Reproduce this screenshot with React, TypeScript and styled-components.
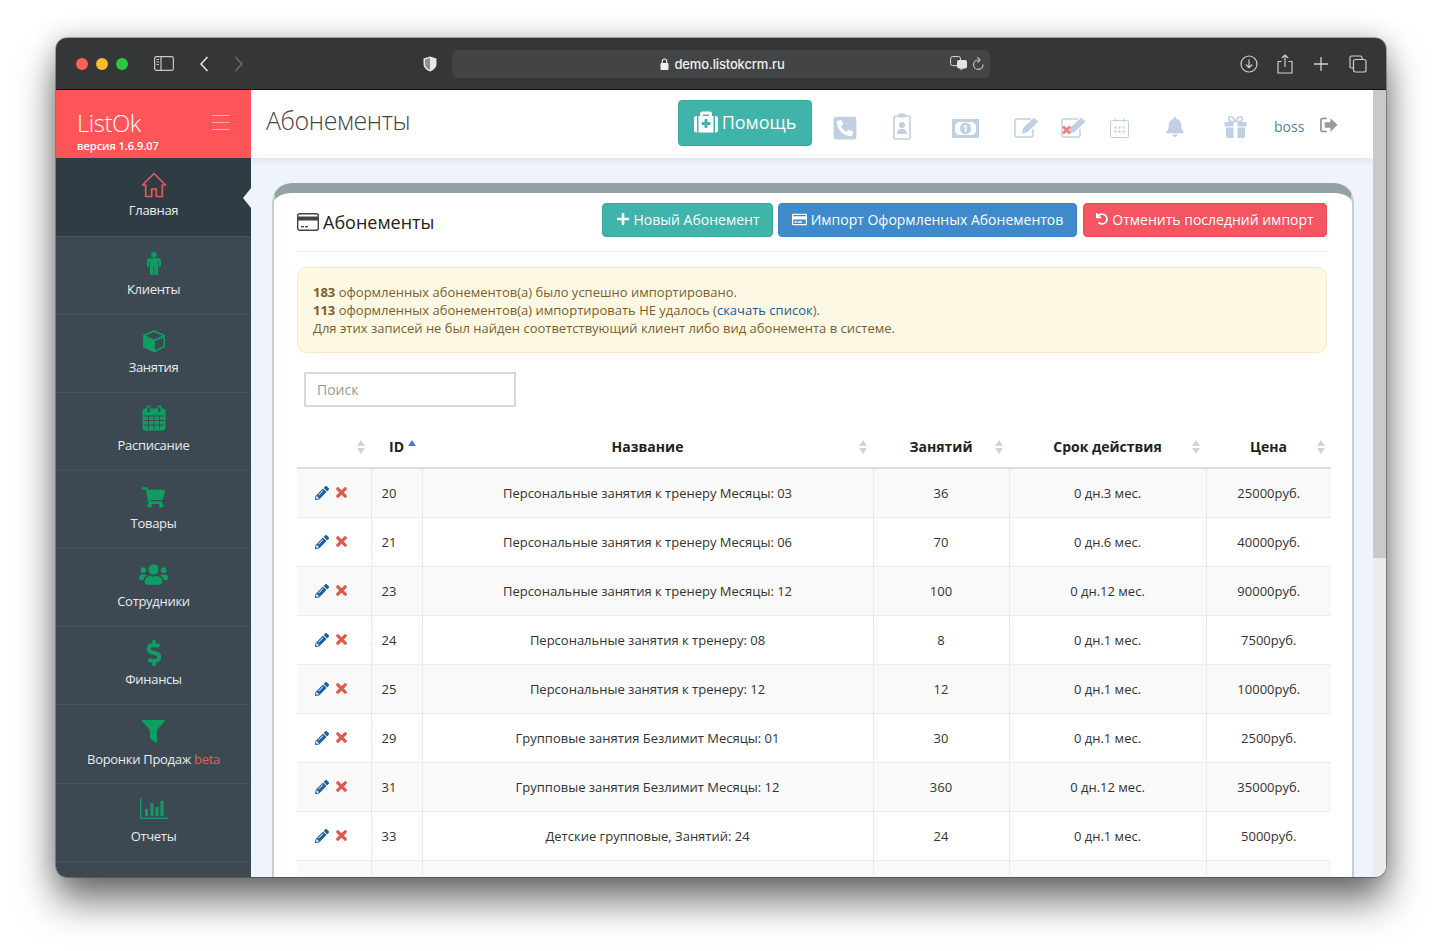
import React from "react";
import styled, { createGlobalStyle } from "styled-components";
import { FaMedkit, FaPlus, FaRegCreditCard, FaUndo, FaPencilAlt, FaShoppingCart, FaUsers, FaDollarSign, FaPhoneSquareAlt, FaBell } from "react-icons/fa";

const Global = createGlobalStyle`
  html, body { margin: 0; padding: 0; background: #fff; }
  * { box-sizing: border-box; }
  body { font-family: "Open Sans", "Liberation Sans", sans-serif; }
`;
const Page = styled.div`
  width: 1441px; height: 951px; padding: 38px 55px 74px 56px; background: #fff; overflow: hidden;
`;
const Win = styled.div`
  width: 1330px; height: 839px; border-radius: 11px; overflow: hidden; display: flex; flex-direction: column;
  background: #eff3fb;
  box-shadow: 0 0 0 .5px rgba(0,0,0,.55), 0 24px 38px rgba(0,0,0,.55), 0 0 26px rgba(0,0,0,.2);
`;
const TitleBar = styled.div`
  height: 52px; flex: none; background: #353638; display: flex; align-items: center; border-bottom: 1px solid #111;
  color: #d4d4d4; padding-left: 20px;
`;
const Light = styled.span<{ $c: string; $mr: number }>`
  width: 12px; height: 12px; border-radius: 50%; background: ${p => p.$c}; margin-right: ${p => p.$mr}px; flex: none;
`;
const ChromeIcon = styled.svg<{ $ml: number }>`
  margin-left: ${p => p.$ml}px; flex: none; display: block;
`;
const UrlBar = styled.div`
  width: 538px; height: 28px; margin-left: 15px; border-radius: 6px; background: #434446; flex: none;
  display: flex; align-items: center; position: relative; justify-content: center; color: #f0f0f0;
  font: 500 13px/26px Inter, "Open Sans", sans-serif; letter-spacing: -.15px;
  gap: 5px; padding: 1px 0 0 3px;
`;
const UrlTools = styled.div`
  position: absolute; right: 5px; top: 5px; display: flex; align-items: center; gap: 4px; height: 18px;
`;
const Body = styled.div`
  flex: 1; min-height: 0; display: flex;
`;
const Sidebar = styled.div`
  width: 195px; flex: none; background: #3c4852; display: flex; flex-direction: column; position: relative;
`;
const Brand = styled.div`
  height: 68px; flex: none; background: #ff5558; color: #fff; padding: 17px 20px 0 21px; position: relative;
`;
const BrandName = styled.div`
  font-size: 24px; font-weight: 300; line-height: 32px; letter-spacing: -.5px;
`;
const BrandVersion = styled.div`
  font-size: 11px; font-weight: 600; line-height: 11px; margin-top: 1px; letter-spacing: -.05px;
`;
const Burger = styled.div`
  position: absolute; right: 21px; top: 25px; width: 18px; height: 15px;
  border-top: 1px solid #ffaaab; border-bottom: 1px solid #ffaaab;
  &::after { content: ""; display: block; height: 1px; background: #ffaaab; margin-top: 6px; }
`;
const NavItem = styled.div<{ $active?: boolean; $h?: number; $pt?: number }>`
  height: ${p => p.$h || 78}px; flex: none; display: flex; flex-direction: column; align-items: center; position: relative;
  background: ${p => (p.$active ? "#303c44" : "#3c4852")};
  border-bottom: 1px solid #465159; padding-top: ${p => p.$pt ?? 12}px; color: #e9ecee; font-size: 13px; line-height: 18px;
  white-space: nowrap; letter-spacing: -.3px;
`;
const NavIcon = styled.div<{ $gap?: number }>`
  height: 28px; display: flex; align-items: center; justify-content: center; color: #0d9e63; margin-bottom: ${p => p.$gap ?? 3}px;
`;
const Notch = styled.span`
  position: absolute; right: 0; top: 30px; width: 8px; height: 20px; background: #eff3fb;
  clip-path: polygon(100% 0, 0 50%, 100% 100%);
`;
const Beta = styled.span` color: #ee5a5a; `;
const Main = styled.div`
  width: 1122px; flex: none; display: flex; flex-direction: column; min-height: 0; overflow: hidden;
`;
const Scrollbar = styled.div`
  width: 13px; flex: none; background: #ececec;
  &::before { content: ""; display: block; height: 468px; background: #c9c9c9; }
`;
const TopBar = styled.div`
  height: 68px; flex: none; background: #fff; display: flex; align-items: center; box-shadow: 0 2px 6px rgba(120,130,150,.16);
  position: relative; padding-left: 15px;
`;
const PageTitle = styled.h1`
  width: 412px; margin: 0; flex: none; font-size: 25px; font-weight: 300; color: #444; letter-spacing: -.4px; line-height: 30px; position: relative; top: -4px;
`;
const HelpButton = styled.div`
  width: 134px; height: 46px; background: #40b3aa; border: 1px solid #38a79e; border-radius: 4px; color: #fff; flex: none;
  font-size: 18px; display: flex; align-items: center; justify-content: center; gap: 4px; position: relative; top: -1px; padding-bottom: 2px;
  svg { font-size: 24px; }
`;
const Slot = styled.div<{ $w: number; $size?: number; $ml?: number; $top?: number }>`
  width: ${p => p.$w}px; flex: none; display: flex; justify-content: center; align-items: center; color: #c0cfe2; position: relative; top: ${p => p.$top ?? 3}px;
  font-size: ${p => p.$size || 24}px; margin-left: ${p => p.$ml || 0}px;
`;
const Boss = styled.div`
  width: 30px; margin-left: 14px; flex: none; font-size: 14px; color: #5b7fa6; position: relative; top: 2px;
`;
const Content = styled.div`
  flex: 1; min-height: 0; padding: 25px 19px 0 21px;
`;
const Card = styled.div`
  width: 1082px; background: #fff; border: 2px solid #c4d0d0; border-top: 10px solid #93a3a3; border-bottom: 0; border-radius: 20px 20px 0 0;
  padding: 0 25px 0 23px; min-height: 800px;
`;
const CardHead = styled.div`
  height: 59px; display: flex; align-items: flex-start; padding-top: 10px; border-bottom: 1px solid #eee;
`;
const CardTitle = styled.div`
  display: flex; align-items: center; gap: 4px; font-size: 18px; color: #222; margin-right: auto; height: 38px; line-height: 38px;
`;
const Action = styled.div<{ $bg: string; $bd: string; $w: number; $ml?: number }>`
  height: 34px; width: ${p => p.$w}px; margin-left: ${p => p.$ml || 0}px; border-radius: 4px; background: ${p => p.$bg}; border: 1px solid ${p => p.$bd};
  color: #fff; font-size: 14px; display: flex; align-items: center; justify-content: center; gap: 4px; white-space: nowrap; flex: none; padding-bottom: 2px;
`;
const Alert = styled.div`
  margin-top: 15px; height: 86px; padding: 15px; background: #fcf8e3; border: 1px solid #faebcc; border-radius: 9px; color: #7d5f2e;
  font-size: 13px; line-height: 18px;
  b { font-weight: 700; }
  a { color: #1e5a96; }
`;
const SearchBox = styled.div`
  width: 212px; height: 35px; margin: 19px 0 0 7px; border: 2px solid #d8d8d8; color: #999; font-size: 14px; line-height: 31px; padding-left: 11px;
`;
const TableClip = styled.div`
  width: 1034px; margin-top: 20px;
`;
const Table = styled.table`
  width: 1034px; table-layout: fixed; border-collapse: collapse; font-size: 13px; color: #333;
`;
const Th = styled.th`
  height: 41px; border-bottom: 2px solid #ddd; font-size: 14px; font-weight: 700; color: #222; text-align: center; position: relative; padding: 0 0 2px;
`;
const SortMark = styled.svg`
  position: absolute; right: 6px; top: 13px;
`;
const Row = styled.tr<{ $odd: boolean }>`
  background: ${p => (p.$odd ? "#f9f9f9" : "#fff")};
`;
const Td = styled.td<{ $left?: boolean }>`
  height: 49px; padding: ${p => (p.$left ? "0 0 0 10px" : "0")}; text-align: ${p => (p.$left ? "left" : "center")};
  border-bottom: 1px solid #ececec; border-left: 1px dotted #ddd;
  &:first-child { border-left: 0; }
`;
const RowTools = styled.div`
  display: flex; justify-content: center; align-items: center; gap: 7px; padding-right: 6px;
`;

const Sort = ({ active }: { active?: boolean }) => (
  <SortMark width="8" height="16" viewBox="0 0 8 16">
    <polygon points="4,0 8,6 0,6" fill={active ? "#5b6fd0" : "#d4d4d4"} />
    {!active && <polygon points="4,14 8,8 0,8" fill="#d4d4d4" />}
  </SortMark>
);

const Home = () => (
  <svg width="26" height="26" viewBox="0 0 26 26" fill="none" stroke="#e05a5a" strokeWidth="1.7" strokeLinejoin="round">
    <path d="M1.5 13 13 1.5 24.5 13h-3.2v11.5h-6V17h-4.6v7.5h-6V13z" />
  </svg>
);
const Male = () => (
  <svg width="14" height="23" viewBox="0 0 14 23" fill="#0d9e63">
    <circle cx="7" cy="2.800" r="2.800" />
    <path d="M2.500 6.200h9A2.500 2.500 0 0 1 14 8.700v5.300a1 1 0 0 1-2 0V9.500h-.8V22a1 1 0 0 1-1 1H8a.6.6 0 0 1-.6-.6V15h-.8v7.400A.6.6 0 0 1 6 23H3.800a1 1 0 0 1-1-1V9.500H2V14a1 1 0 0 1-2 0V8.700a2.500 2.500 0 0 1 2.500-2.500z" />
  </svg>
);
const Cube = () => (
  <svg width="24" height="24" viewBox="0 0 24 24">
    <path d="M12 1 23 6v12l-11 5.500L1 18V6z" fill="#0d9e63" />
    <path d="M12 3 20.500 6.800 12 10.500 3.500 6.800z" fill="#3c4852" />
    <path d="M13 12.200 21.500 8.400V17L13 21.300z" fill="#3c4852" />
  </svg>
);
const CalendarBig = () => (
  <svg width="24" height="26" viewBox="0 0 24 26" fill="none" stroke="#0d9e63">
    <rect x="1" y="4" width="22" height="21" rx="2" fill="#0d9e63" />
    <path d="M2 11h20M2 15.500h20M2 20h20M6.500 11v13M12 11v13M17.500 11v13" stroke="#3c4852" strokeWidth="1" />
    <rect x="5" y="1" width="3.400" height="7" rx="1.700" fill="#3c4852" strokeWidth="1.300" />
    <rect x="15.600" y="1" width="3.400" height="7" rx="1.700" fill="#3c4852" strokeWidth="1.300" />
  </svg>
);
const Funnel = () => (
  <svg width="25" height="25" viewBox="0 0 25 25"><path d="M0 1h24.500L16 11v13.500L9 19.500V11z" fill="#0d9e63" /></svg>
);
const Bars = () => (
  <svg width="28" height="22" viewBox="0 0 28 22" fill="#0d9e63">
    <rect x="0" y="0" width="1.300" height="21" /><rect x="0" y="19.600" width="28" height="1.400" />
    <rect x="5" y="11" width="3" height="7" /><rect x="10.500" y="5" width="3" height="13" /><rect x="15.500" y="9" width="3" height="9" /><rect x="20.500" y="3" width="3" height="15" />
  </svg>
);
const CardIcon = () => (
  <svg width="22" height="18" viewBox="0 0 22 18">
    <rect x=".7" y=".7" width="20.600" height="16.600" rx="2" fill="#fff" stroke="#444" strokeWidth="1.400" />
    <rect x="1" y="3.500" width="20" height="4" fill="#444" />
    <rect x="4" y="13" width="3" height="1.300" fill="#444" /><rect x="8" y="13" width="3" height="1.300" fill="#444" />
  </svg>
);
const Badge = () => (
  <svg width="18" height="27" viewBox="0 0 18 27" fill="none">
    <rect x="1" y="3" width="16" height="23" rx="1.500" stroke="#c0cfe2" strokeWidth="1.600" />
    <rect x="5.500" y="0.500" width="7" height="4" rx="1" fill="#c0cfe2" />
    <circle cx="9" cy="12" r="3" fill="#c0cfe2" />
    <path d="M3.800 21c0-3.600 2.400-5 5.200-5s5.200 1.400 5.200 5z" fill="#c0cfe2" />
  </svg>
);
const Bill = () => (
  <svg width="27" height="19" viewBox="0 0 27 19">
    <path fillRule="evenodd" fill="#c0cfe2" d="M0 0h27v19H0zM6 3 3 6v7l3 3h15l3-3V6l-3-3z" />
    <ellipse cx="13.500" cy="9.500" rx="5.500" ry="6" fill="#c0cfe2" />
    <rect x="12.800" y="6.200" width="1.800" height="6.600" fill="#fff" />
    <rect x="11.400" y="6.800" width="1.600" height="1.400" fill="#fff" />
  </svg>
);
const Pad = ({ cross }: { cross?: boolean }) => (
  <svg width="26" height="21" viewBox="0 0 26 21" fill="none">
    <path d="M17 2H3a2 2 0 0 0-2 2v14a2 2 0 0 0 2 2h14a2 2 0 0 0 2-2v-6" stroke="#c0cfe2" strokeWidth="1.500" />
    <path d="M9 11 20 .8l4.400 3.700L13.600 15 8 17z" fill="#c0cfe2" />
    {cross && <path d="M2 9.500l7 7M9 9.500l-7 7" stroke="#f08080" strokeWidth="2.800" />}
  </svg>
);
const CalOutline = () => (
  <svg width="19" height="20" viewBox="0 0 19 20" fill="none" stroke="#c0cfe2">
    <rect x=".5" y="2.500" width="18" height="17" rx="1" />
    <path d="M5 0v4M14 0v4" />
    <path d="M4.500 9.500h2M8.500 9.500h2M12.500 9.500h2M4.500 13.500h2M8.500 13.500h2M12.500 13.500h2" strokeWidth="1.800" />
  </svg>
);
const GiftBox = () => (
  <svg width="23" height="22" viewBox="0 0 23 22" fill="#c0cfe2">
    <path d="M.5 6h9v4.500h-9zM13.500 6h9v4.500h-9zM2 11.500h7.500V22H4a2 2 0 0 1-2-2zM13.500 11.500H21V20a2 2 0 0 1-2 2h-5.500z" />
    <path d="M11.500 5.500C9.500 1.500 7.500 0 5.800.7 3.900 1.500 4.600 5 7 5.500zM11.500 5.500c2-4 4-5.500 5.700-4.800 1.900.8 1.200 4.300-1.200 4.800z" fill="none" stroke="#c0cfe2" strokeWidth="1.600" />
  </svg>
);
const Logout = () => (
  <svg width="19" height="16" viewBox="0 0 19 16" fill="none">
    <path d="M7 1.200H2.500A1.500 1.500 0 0 0 1 2.700v10.600a1.500 1.500 0 0 0 1.500 1.500H7" stroke="#888" strokeWidth="1.600" />
    <path d="M5 5h6V1l7.500 7-7.500 7v-4H5z" fill="#999" />
  </svg>
);
const Cross = () => (
  <svg width="11" height="11" viewBox="0 0 11 11" fill="none" stroke="#e0594f" strokeWidth="3.200" strokeLinecap="round">
    <path d="M1.800 1.800l7.400 7.400M9.200 1.800 1.800 9.200" />
  </svg>
);

const rows = [
  ["20", "Персональные занятия к тренеру Месяцы: 03", "36", "0 дн.3 мес.", "25000руб."],
  ["21", "Персональные занятия к тренеру Месяцы: 06", "70", "0 дн.6 мес.", "40000руб."],
  ["23", "Персональные занятия к тренеру Месяцы: 12", "100", "0 дн.12 мес.", "90000руб."],
  ["24", "Персональные занятия к тренеру: 08", "8", "0 дн.1 мес.", "7500руб."],
  ["25", "Персональные занятия к тренеру: 12", "12", "0 дн.1 мес.", "10000руб."],
  ["29", "Групповые занятия Безлимит Месяцы: 01", "30", "0 дн.1 мес.", "2500руб."],
  ["31", "Групповые занятия Безлимит Месяцы: 12", "360", "0 дн.12 мес.", "35000руб."],
  ["33", "Детские групповые, Занятий: 24", "24", "0 дн.1 мес.", "5000руб."],
];

const nav: { label: React.ReactNode; icon: React.ReactNode; h?: number; active?: boolean; pt?: number; gap?: number }[] = [
  { label: "Главная", icon: <Home />, active: true, h: 79, pt: 13, gap: 2 },
  { label: "Клиенты", icon: <Male /> },
  { label: "Занятия", icon: <Cube /> },
  { label: "Расписание", icon: <CalendarBig />, pt: 11, gap: 4 },
  { label: "Товары", icon: <FaShoppingCart size={23} /> },
  { label: "Сотрудники", icon: <FaUsers size={29} />, pt: 11, gap: 4 },
  { label: "Финансы", icon: <FaDollarSign size={26} /> },
  { label: <>Воронки Продаж <Beta>beta</Beta></>, icon: <Funnel />, h: 79, gap: 5 },
  { label: "Отчеты", icon: <Bars />, pt: 11, gap: 4 },
];

export default function App() {
  return (
    <Page>
      <Global />
      <Win>
        <TitleBar>
          <Light $c="#ff5f57" $mr={8} />
          <Light $c="#febc2e" $mr={8} />
          <Light $c="#28c840" $mr={0} />
          <ChromeIcon $ml={26} width="20" height="15" viewBox="0 0 20 15" fill="none" stroke="#c8c8c8" strokeWidth="1.200">
            <rect x=".6" y=".6" width="18.800" height="13.800" rx="1.800" /><path d="M7 1v13" /><path d="M2.500 3.500h2.500M2.500 6h2.500M2.500 8.500h2.500" strokeWidth="1" />
          </ChromeIcon>
          <ChromeIcon $ml={25} width="10" height="16" viewBox="0 0 10 16" fill="none" stroke="#e4e4e4" strokeWidth="1.500"><path d="M8.500 1 2 8l6.500 7" /></ChromeIcon>
          <ChromeIcon $ml={25} width="10" height="16" viewBox="0 0 10 16" fill="none" stroke="#6a6a6a" strokeWidth="1.500"><path d="M1.500 1 8 8l-6.500 7" /></ChromeIcon>
          <ChromeIcon $ml={179} width="14" height="16" viewBox="0 0 14 16">
            <path d="M7 .5 13.500 2.500V8c0 3.500-3 6-6.500 7.500C3.500 14 .5 11.500.5 8V2.500z" fill="#e6e6e6" />
            <path d="M7 2 2 3.500V8c0 2.500 2 4.500 5 6z" fill="#8e8e8e" />
          </ChromeIcon>
          <UrlBar>
            <svg width="9" height="12" viewBox="0 0 9 12"><rect x=".5" y="5" width="8" height="7" rx="1" fill="#eee" /><path d="M2.300 5.500V3.200a2.200 2.200 0 0 1 4.400 0v2.300" fill="none" stroke="#eee" strokeWidth="1.100" /></svg>
            <span>demo.listokcrm.ru</span>
            <UrlTools>
              <svg width="18" height="15" viewBox="0 0 18 15"><rect x=".6" y=".6" width="10" height="9" rx="2" fill="none" stroke="#ddd" /><rect x="7" y="4" width="10" height="8.500" rx="2" fill="#e4e4e4" /><path d="M10 14.500 11 12h3z" fill="#e4e4e4" /></svg>
              <svg width="13" height="14" viewBox="0 0 13 14" fill="none" stroke="#cfcfcf" strokeWidth="1.100"><path d="M6 3a4.700 4.700 0 1 0 5 4.500" /><path d="M5.500 .5 8 3 5.500 5.500" /></svg>
            </UrlTools>
          </UrlBar>
          <ChromeIcon $ml={250} width="18" height="18" viewBox="0 0 18 18" fill="none" stroke="#cfcfcf" strokeWidth="1.200"><circle cx="9" cy="9" r="8" /><path d="M9 4.500v8M5.800 9.500 9 12.700l3.200-3.200" /></ChromeIcon>
          <ChromeIcon $ml={19} width="16" height="20" viewBox="0 0 16 20" fill="none" stroke="#cfcfcf" strokeWidth="1.200"><path d="M4.500 7.500H1v11.500h14V7.500h-3.500M8 13V1M4.800 4 8 1l3.200 3" /></ChromeIcon>
          <ChromeIcon $ml={21} width="14" height="14" viewBox="0 0 14 14" fill="none" stroke="#cfcfcf" strokeWidth="1.300"><path d="M7 0v14M0 7h14" /></ChromeIcon>
          <ChromeIcon $ml={21} width="18" height="18" viewBox="0 0 18 18" fill="none" stroke="#cfcfcf" strokeWidth="1.200"><path d="M4 13H2.500A1.500 1.500 0 0 1 1 11.500v-9A1.500 1.500 0 0 1 2.500 1h9A1.500 1.500 0 0 1 13 2.500V4" /><rect x="4.500" y="4.500" width="12.500" height="12.500" rx="2" /></ChromeIcon>
        </TitleBar>
        <Body>
          <Sidebar>
            <Brand>
              <BrandName>ListOk</BrandName>
              <BrandVersion>версия 1.6.9.07</BrandVersion>
              <Burger />
            </Brand>
            {nav.map((n, i) => (
              <NavItem key={i} $active={n.active} $h={n.h} $pt={n.pt}>
                {n.active && <Notch />}
                <NavIcon $gap={n.gap}>{n.icon}</NavIcon>
                <span>{n.label}</span>
              </NavItem>
            ))}
          </Sidebar>
          <Main>
            <TopBar>
              <PageTitle>Абонементы</PageTitle>
              <HelpButton><FaMedkit />Помощь</HelpButton>
              <Slot $w={66} $size={26} $top={4}><FaPhoneSquareAlt /></Slot>
              <Slot $w={48} $top={2}><Badge /></Slot>
              <Slot $w={78} $top={4}><Bill /></Slot>
              <Slot $w={46}><Pad /></Slot>
              <Slot $w={48}><Pad cross /></Slot>
              <Slot $w={42} $top={4}><CalOutline /></Slot>
              <Slot $w={70} $size={20}><FaBell /></Slot>
              <Slot $w={50}><GiftBox /></Slot>
              <Boss>boss</Boss>
              <Slot $w={18} $ml={16} $top={1}><Logout /></Slot>
            </TopBar>
            <Content>
              <Card>
                <CardHead>
                  <CardTitle><CardIcon />Абонементы</CardTitle>
                  <Action $bg="#40b3aa" $bd="#38a79e" $w={171}><FaPlus size={14} />Новый Абонемент</Action>
                  <Action $bg="#3f8acb" $bd="#3a7fbc" $w={299} $ml={5}><FaRegCreditCard size={15} />Импорт Оформленных Абонементов</Action>
                  <Action $bg="#f55560" $bd="#ee4a55" $w={244} $ml={6}><FaUndo size={12} />Отменить последний импорт</Action>
                </CardHead>
                <Alert>
                  <b>183</b> оформленных абонементов(а) было успешно импортировано.<br />
                  <b>113</b> оформленных абонементов(а) импортировать НЕ удалось (<a>скачать список</a>).<br />
                  Для этих записей не был найден соответствующий клиент либо вид абонемента в системе.
                </Alert>
                <SearchBox>Поиск</SearchBox>
                <TableClip>
                  <Table>
                    <colgroup>
                      <col width="74" /><col width="51" /><col width="451" /><col width="136" /><col width="197" /><col width="125" />
                    </colgroup>
                    <thead>
                      <tr>
                        <Th><Sort /></Th>
                        <Th>ID<Sort active /></Th>
                        <Th>Название<Sort /></Th>
                        <Th>Занятий<Sort /></Th>
                        <Th>Срок действия<Sort /></Th>
                        <Th>Цена<Sort /></Th>
                      </tr>
                    </thead>
                    <tbody>
                      {rows.map((r, i) => (
                        <Row key={r[0]} $odd={i % 2 === 0}>
                          <Td>
                            <RowTools>
                              <FaPencilAlt size={14} color="#1f5fa0" />
                              <Cross />
                            </RowTools>
                          </Td>
                          <Td $left>{r[0]}</Td>
                          <Td>{r[1]}</Td>
                          <Td>{r[2]}</Td>
                          <Td>{r[3]}</Td>
                          <Td>{r[4]}</Td>
                        </Row>
                      ))}
                      <Row $odd><Td /><Td /><Td /><Td /><Td /><Td /></Row>
                    </tbody>
                  </Table>
                </TableClip>
              </Card>
            </Content>
          </Main>
          <Scrollbar />
        </Body>
      </Win>
    </Page>
  );
}
